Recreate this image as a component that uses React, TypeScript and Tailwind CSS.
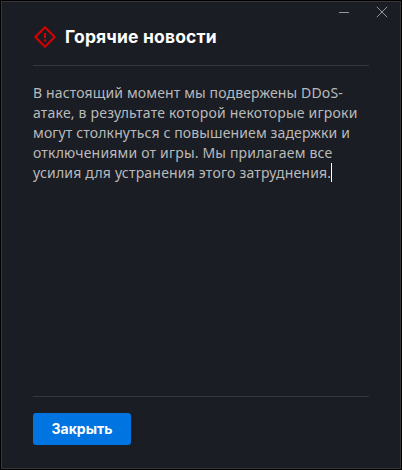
const PARAGRAPH = [
  { text: 'В настоящий момент мы подвержены DDoS-', tracking: 'tracking-[0.14px]' },
  { text: 'атаке, в результате которой некоторые игроки', tracking: 'tracking-[0.2px]' },
  { text: 'могут столкнуться с повышением задержки и', tracking: 'tracking-[0.13px]' },
  { text: 'отключениями от игры. Мы прилагаем все', tracking: 'tracking-[0.18px]' },
  { text: 'усилия для устранения этого затруднения.', tracking: 'tracking-[0.2px]' },
];

function AlertIcon() {
  return (
    <svg width="24" height="24" viewBox="0 0 24 24" fill="none" stroke="#d90000" strokeWidth="2" strokeLinejoin="round">
      <path d="M12 2.3 21.7 12 12 21.7 2.3 12Z" />
      <path d="M12 8v5M12 14.5v2" />
    </svg>
  );
}

export default function App() {
  return (
    <div className="h-[470px] w-[402px] bg-black p-px">
      <div className="relative flex h-full flex-col border border-[#36363c] bg-[#1b1d24] px-[31px] pt-[23px] pb-[23px]">
        <div className="absolute top-[4px] right-[12px] flex">
          <button aria-label="Свернуть" className="mr-[26px]">
            <svg width="12" height="12" viewBox="0 0 12 12" stroke="#96979a">
              <path d="M1 6.5h10" />
            </svg>
          </button>
          <button aria-label="Закрыть окно">
            <svg width="12" height="12" viewBox="0 0 12 12" stroke="#96979a">
              <path d="M.8.8l10.4 10.4M11.2.8.8 11.2" />
            </svg>
          </button>
        </div>
        <header className="flex h-[41px] shrink-0 items-start border-b border-[#36363e]">
          <AlertIcon />
          <h1 className="ml-[8px] font-['Inter',sans-serif] text-[17.5px] leading-[24px] font-bold tracking-[0.16px] whitespace-nowrap text-white">
            Горячие новости
          </h1>
        </header>
        <main className="flex-1 pt-[17px] font-['Noto_Sans',sans-serif] text-[14px] leading-[20px] text-[#b9babb]">
          {PARAGRAPH.map(({ text, tracking }, i) => (
            <p key={text} className={`flex whitespace-nowrap ${tracking}`}>
              {text}
              {i === PARAGRAPH.length - 1 && <span className="h-[19px] w-px bg-white" />}
            </p>
          ))}
        </main>
        <footer className="shrink-0 border-t border-[#36363e] pt-[16px]">
          <button className="flex h-[32px] w-[98px] items-center justify-center rounded-[3px] bg-[#0074e0] pb-px font-['Inter',sans-serif] text-[14px] font-bold text-white">
            Закрыть
          </button>
        </footer>
      </div>
    </div>
  );
}
